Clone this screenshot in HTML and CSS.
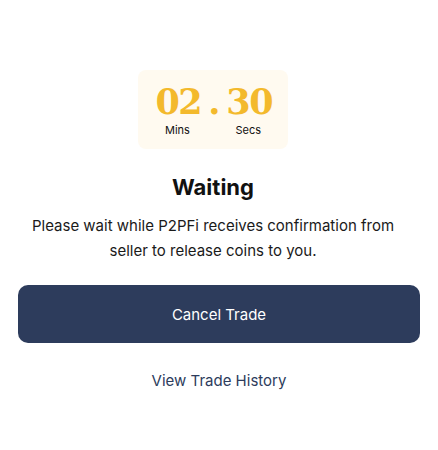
FILE: index.html
```html
<!DOCTYPE html>
<html>
<head>
<meta charset="utf-8">
<link rel="stylesheet" href="styles.css">
</head>
<body>
<div class="page">
  <div class="info">
    <div class="timer">
      <div class="digits">
        <span class="num">02</span><span class="dot">.</span><span class="num">30</span>
      </div>
      <div class="labels">
        <span>Mins</span><span>Secs</span>
      </div>
    </div>
    <h1 class="title">Waiting</h1>
    <p class="desc">Please wait while P2PFi receives confirmation from seller to release coins to you.</p>
  </div>
  <button class="cancel">Cancel Trade</button>
  <a class="history">View Trade History</a>
</div>
</body>
</html>
```
FILE: styles.css
```css
* { box-sizing: border-box; }
body {
  margin: 0;
  background: #fff;
  font-family: Inter, "Noto Sans", sans-serif;
  color: #111;
}
.page {
  display: flex;
  flex-direction: column;
  align-items: center;
  padding: 70px 18px 0;
}
.info {
  display: flex;
  flex-direction: column;
  align-items: center;
  align-self: stretch;
  padding-right: 12px;
}
.timer {
  width: 150px;
  height: 79px;
  background: #fffaf0;
  border-radius: 8px;
  display: flex;
  flex-direction: column;
  align-items: center;
  padding-top: 12px;
}
.digits {
  display: flex;
  align-items: baseline;
  font-family: "DejaVu Serif", serif;
  font-weight: bold;
  font-size: 35px;
  line-height: 40px;
  color: #f3b92c;
  gap: 6px;
}
.num {
  letter-spacing: -1.5px;
}
.num:last-child {
  margin-right: -1.5px;
}
.dot {
  margin-left: 1px;
}
.labels {
  display: flex;
  justify-content: space-between;
  width: 96px;
  font-size: 11px;
  line-height: 14px;
  margin-top: 1px;
  color: #111;
}
.title {
  margin: 24px 0 0;
  font-size: 22px;
  line-height: 28px;
  font-weight: 700;
  color: #111;
}
.desc {
  margin: 12px 0 0;
  font-size: 15px;
  line-height: 25px;
  text-align: center;
  max-width: 380px;
  color: #1a1a1a;
}
.cancel {
  margin-top: 22px;
  width: 100%;
  height: 58px;
  border: none;
  border-radius: 10px;
  background: #2d3c5c;
  color: #fff;
  font-family: inherit;
  font-size: 15px;
}
.history {
  margin-top: 28px;
  font-size: 15px;
  color: #2d3c5c;
}
```
